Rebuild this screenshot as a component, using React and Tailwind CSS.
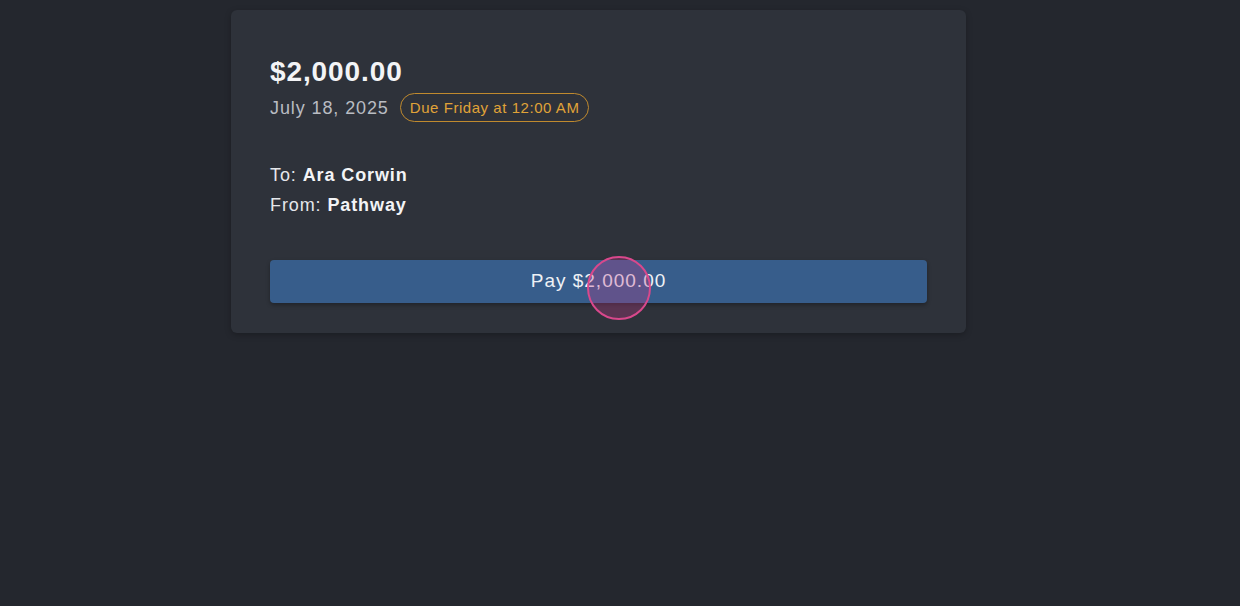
export default function App() {
  return (
    <div className="min-h-screen bg-[#24272e] pt-[10px] font-['Liberation_Sans',Arial,sans-serif] tracking-[0.9px]">
      <div className="relative ml-[231px] w-[735px] rounded-md bg-[#2e323a] px-[39px] pb-[30px] pt-[45px] shadow-[0_2px_6px_rgba(0,0,0,0.25)]">
        {/* Montant et échéance */}
        <div className="text-[28px] font-bold leading-[34px] text-[#f3f4f6]">$2,000.00</div>
        <div className="mt-[4px] flex items-center gap-[11px]">
          <span className="text-[18px] leading-[24px] text-[#b9bcc2]">July 18, 2025</span>
          <span className="rounded-full border border-[#c08a2e] px-[9px] py-[4px] text-[15px] leading-[19px] tracking-[0.55px] text-[#e0a338]">
            Due Friday at 12:00 AM
          </span>
        </div>

        {/* Destinataire */}
        <div className="mt-[38px] text-[18px] leading-[30px] text-[#e5e7eb]">
          <div>To: <span className="font-bold text-[#f3f4f6]">Ara Corwin</span></div>
          <div>From: <span className="font-bold text-[#f3f4f6]">Pathway</span></div>
        </div>

        <button className="mt-[40px] block h-[43px] w-full rounded-[4px] bg-[#375d8b] text-[19px] tracking-[1px] text-[#eef1f5] shadow-[0_2px_4px_rgba(0,0,0,0.3)]">
          Pay $2,000.00
        </button>

        {/* Indicateur de clic */}
        <div className="pointer-events-none absolute left-[356px] top-[246px] h-[64px] w-[64px] rounded-full border-2 border-[#d9488c] bg-[#c03c8a]/30" />
      </div>
    </div>
  );
}
